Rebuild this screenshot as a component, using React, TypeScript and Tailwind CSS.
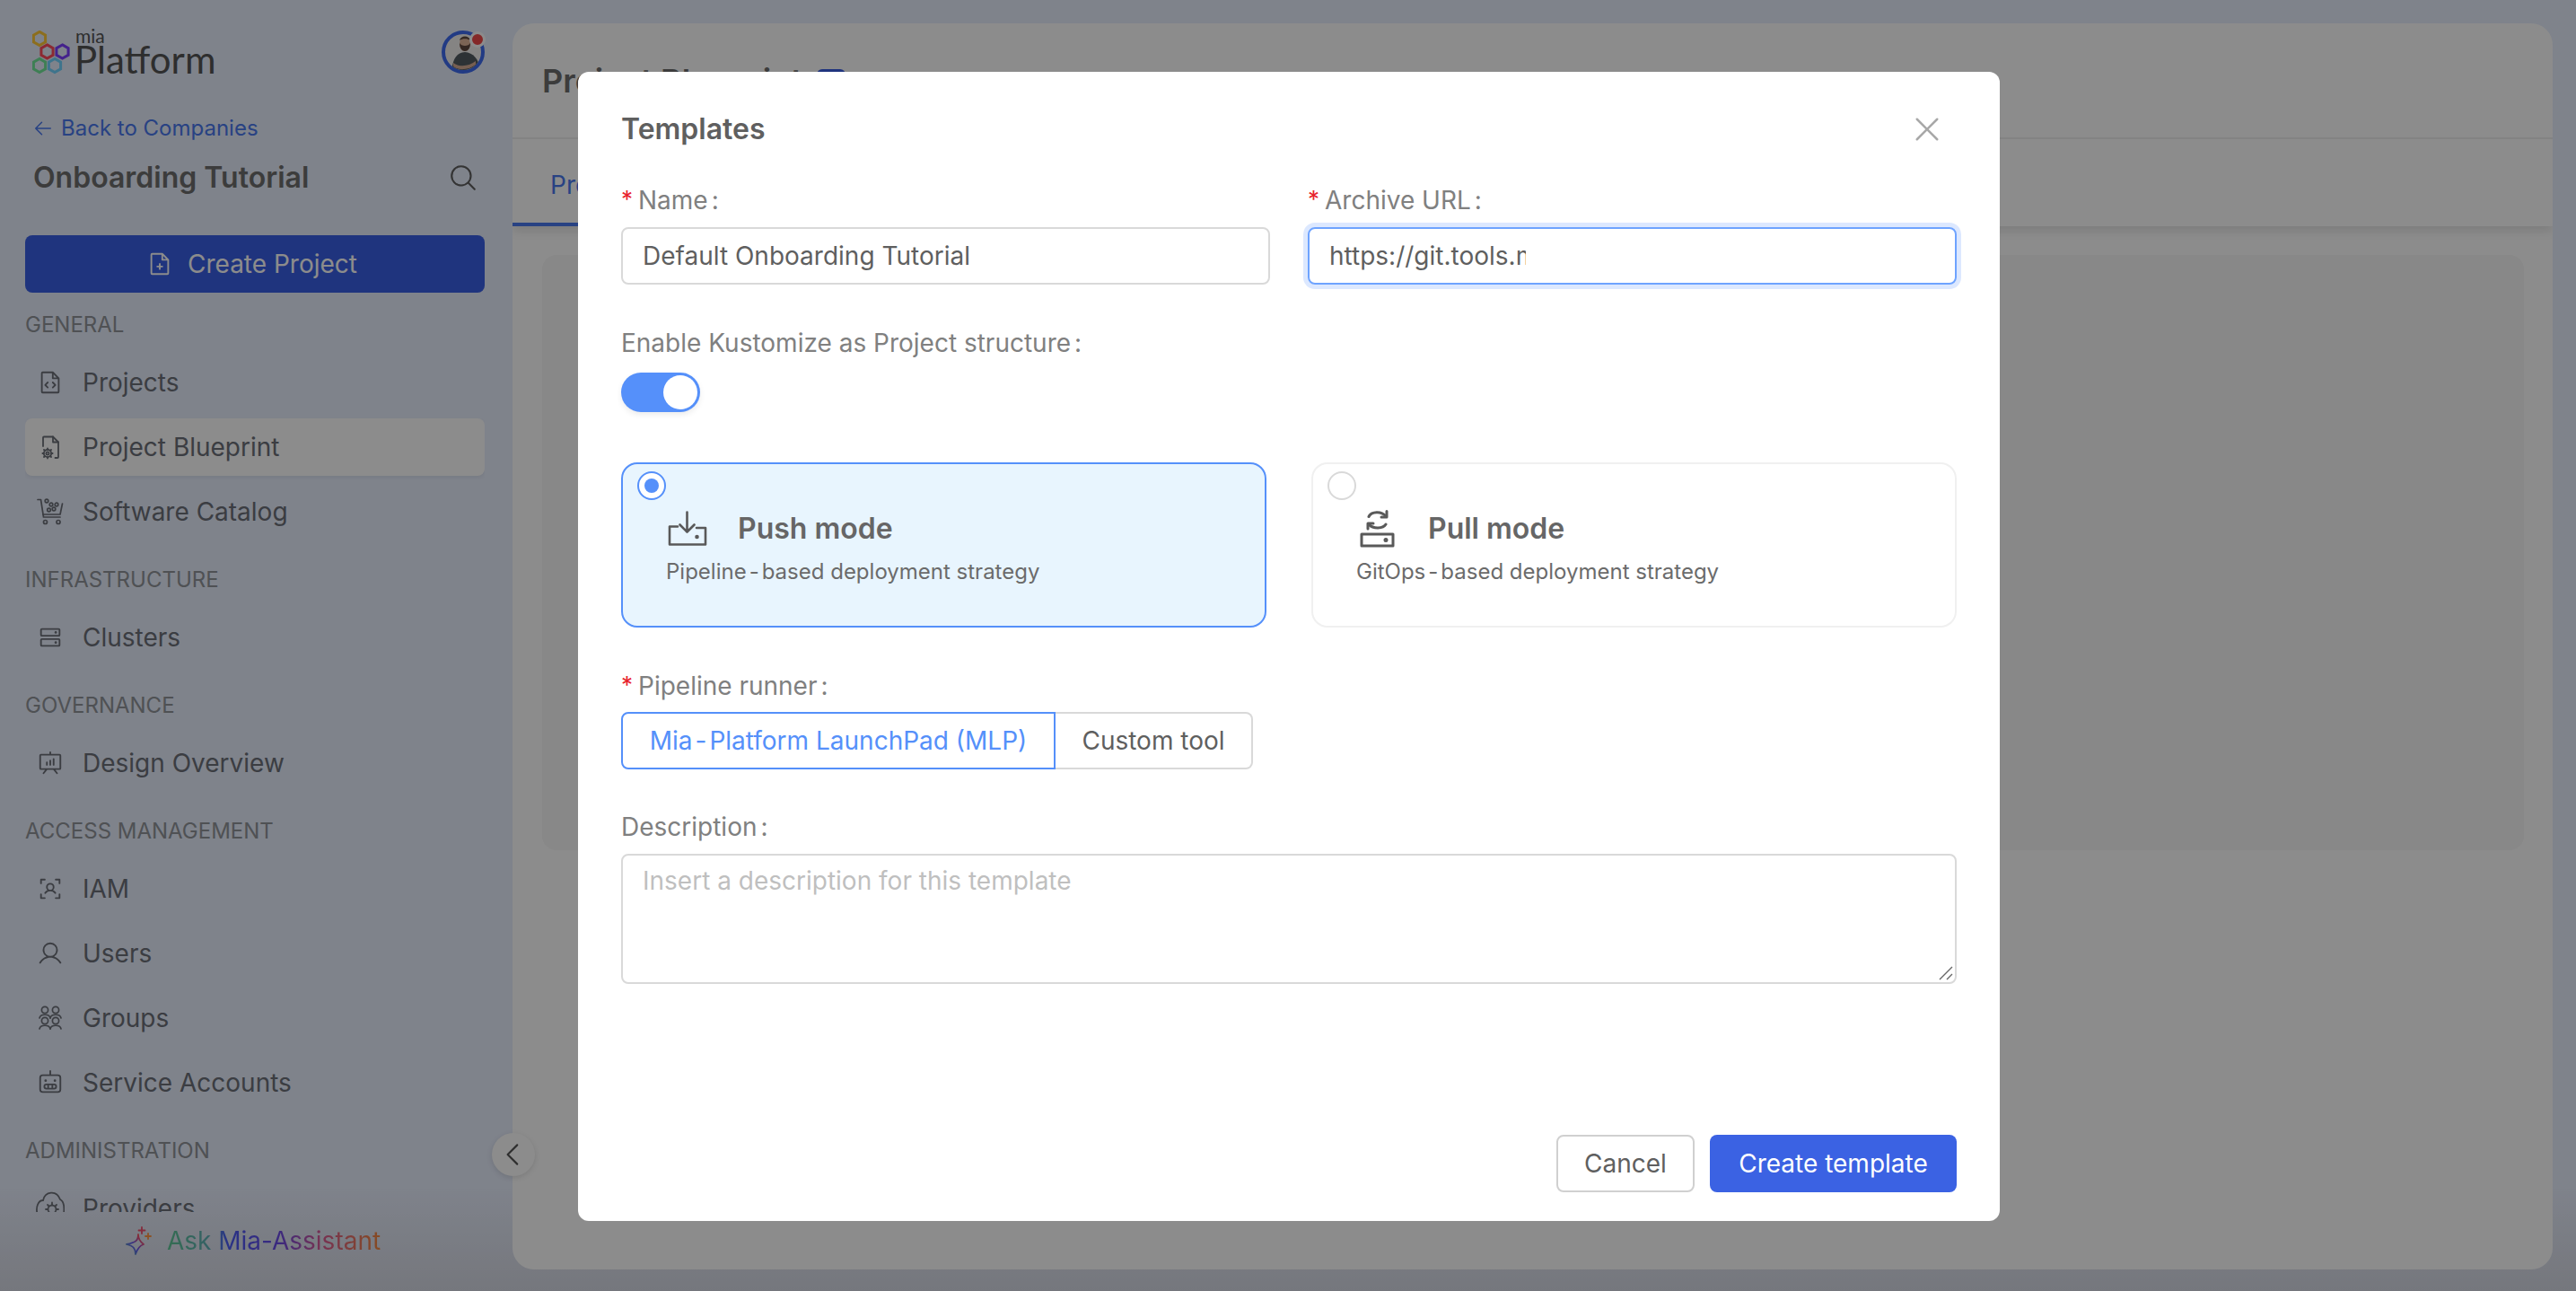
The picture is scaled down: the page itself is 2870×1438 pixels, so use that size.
import {
  PiArrowLeft,
  PiCaretLeft,
  PiFileCode,
  PiFilePlus,
  PiHardDrives,
  PiMagnifyingGlass,
  PiPresentationChart,
  PiRobot,
  PiUser,
  PiUserFocus,
  PiX,
} from "react-icons/pi";
import type { ReactNode } from "react";

function Hex({ cx, cy, color }: { cx: number; cy: number; color: string }) {
  const r = 7.6;
  const w = r * 0.866;
  return (
    <polygon
      points={`${cx},${cy - r} ${cx + w},${cy - r / 2} ${cx + w},${cy + r / 2} ${cx},${cy + r} ${cx - w},${cy + r / 2} ${cx - w},${cy - r / 2}`}
      fill="none"
      stroke={color}
      strokeWidth="3"
    />
  );
}

function Logo() {
  return (
    <div className="flex items-start gap-[3px]">
      <svg width="44" height="50" viewBox="0 0 44 50">
        <Hex cx={8} cy={9} color="#ffc838" />
        <Hex cx={16.5} cy={23.5} color="#ff4c5b" />
        <Hex cx={33.5} cy={23.5} color="#7d3eff" />
        <Hex cx={8} cy={39} color="#72e79a" />
        <Hex cx={25} cy={39} color="#72d3ff" />
      </svg>
      <div className="font-['Lato',sans-serif] text-[#555555] flex flex-col -mt-[3px]">
        <span className="h-[18px] pl-[1px] text-[21px] leading-[18px]">mia</span>
        <span className="h-[34px] text-[42px] leading-[34px]">Platform</span>
      </div>
    </div>
  );
}

function Avatar() {
  return (
    <div className="relative w-[48px] h-[48px]">
      <svg width="48" height="48" viewBox="0 0 48 48">
        <circle cx="24" cy="24" r="22" fill="#f3f0ee" stroke="#3f6cf0" strokeWidth="4" />
        <clipPath id="avatar-clip">
          <circle cx="24" cy="24" r="20" />
        </clipPath>
        <g clipPath="url(#avatar-clip)">
          <path d="M11 48 C12 32 16 25 26 24 C36 25 42 32 44 48 Z" fill="#525c62" />
          <ellipse cx="26" cy="15" rx="6" ry="8" fill="#e0b69c" />
          <path d="M20 14 C20 26 32 26 32 14 C30 18 22 18 20 14 Z" fill="#5e483e" />
          <path d="M20 11 C21 5 31 5 32 11 C29 8.5 23 8.5 20 11 Z" fill="#5e483e" />
          <path d="M13 36 C20 41 30 40 38 34 L38 38 C30 44 19 45 13 40 Z" fill="#d8ae96" />
        </g>
      </svg>
      <div className="absolute right-[-1px] top-[1px] w-[18px] h-[18px] rounded-full bg-[#f04a4a] border-[3px] border-white" />
    </div>
  );
}

function BlueprintIcon() {
  return (
    <svg width="30" height="30" viewBox="0 0 30 30" fill="none" stroke="currentColor" strokeWidth="1.8" strokeLinejoin="round" strokeLinecap="round">
      <path d="M7 14 V4.5 a1 1 0 0 1 1-1 H18 l6 6 V26 a1 1 0 0 1-1 1 h-2.5" />
      <path d="M18 3.5 V9.5 H24" />
      <circle cx="12" cy="22" r="1.6" />
      <circle cx="12" cy="22" r="4.2" />
      <path d="M12 16.4 V17.8 M12 26.2 V27.6 M6.4 22 H7.8 M16.2 22 H17.6 M8 18 L9 19 M15 25 L16 26 M8 26 L9 25 M15 19 L16 18" />
    </svg>
  );
}

function CatalogIcon() {
  return (
    <svg width="30" height="30" viewBox="0 0 30 30" fill="none" stroke="currentColor" strokeWidth="1.7" strokeLinecap="round" strokeLinejoin="round">
      <path d="M1 1.5 H4.5 L7.5 21 H26" />
      <path d="M28.5 6 L26 18 H7" />
      <circle cx="9.5" cy="26.5" r="2" />
      <circle cx="24" cy="26.5" r="2" />
      <circle cx="11" cy="3" r="1.8" />
      <circle cx="16" cy="7" r="1.8" />
      <circle cx="22" cy="7" r="1.8" />
      <circle cx="13.5" cy="13" r="1.8" />
      <circle cx="19" cy="12" r="1.8" />
    </svg>
  );
}

function GroupsIcon() {
  const person = (x: number, y: number) => (
    <g key={`${x}-${y}`}>
      <circle cx={x} cy={y} r="3.6" />
      <path d={`M${x - 6} ${y + 9} C${x - 5} ${y + 4} ${x + 5} ${y + 4} ${x + 6} ${y + 9}`} />
    </g>
  );
  return (
    <svg width="30" height="30" viewBox="0 0 30 30" fill="none" stroke="currentColor" strokeWidth="1.7" strokeLinecap="round">
      {person(9, 6)}
      {person(21, 6)}
      {person(9, 18)}
      {person(21, 18)}
    </svg>
  );
}

function ProvidersIcon() {
  return (
    <svg width="32" height="44" viewBox="0 0 32 44" fill="none" stroke="currentColor" strokeWidth="1.8" strokeLinecap="round" className="shrink-0">
      <path d="M2 30 C-1 20 3 13 8 13 C10 3 23 1 27 12 C31 14 32 20 31 28" />
      <circle cx="18" cy="23" r="4.5" />
      <path d="M18 15.5 V18 M11 23 H13 M23 23 H25 M13 18 L14.5 19.5 M21.5 19.5 L23 18" />
    </svg>
  );
}

function PushIcon() {
  return (
    <svg width="44" height="40" viewBox="0 0 44 40" fill="none" stroke="#595959" strokeWidth="2.6" strokeLinecap="round" strokeLinejoin="round">
      <path d="M21.5 1.5 V23 M13.5 15.5 L21.5 23.5 L29.5 15.5" />
      <path d="M11 17.5 H2 V37.5 H42 V19 H32" />
      <circle cx="32.5" cy="29" r="1" fill="#595959" />
    </svg>
  );
}

function PullIcon() {
  return (
    <svg width="40" height="42" viewBox="0 0 40 42" fill="none" stroke="#595959" strokeWidth="3" strokeLinecap="round" strokeLinejoin="round">
      <path d="M10 7.5 C13 1.5 24 1 29 7" />
      <path d="M30 1.5 V8 H24" />
      <path d="M29 16 C26 21 15 21.5 10 16" />
      <path d="M9 21 V15 H15" />
      <path d="M2 27 H37 V40 H2 Z" />
      <circle cx="29" cy="33.5" r="1" fill="#595959" />
    </svg>
  );
}

function SparkleIcon() {
  return (
    <svg width="32" height="32" viewBox="0 0 32 32" fill="none" strokeWidth="1.8" strokeLinejoin="round" strokeLinecap="round">
      <defs>
        <linearGradient id="spark" x1="0" y1="1" x2="1" y2="0">
          <stop offset="0" stopColor="#5fc796" />
          <stop offset="0.45" stopColor="#5f55f5" />
          <stop offset="0.8" stopColor="#f0506e" />
          <stop offset="1" stopColor="#ff9440" />
        </linearGradient>
      </defs>
      <path d="M16 9 C16 16 13 18 3 20 C11 22 13 25 13 31 C15 25 19 21 22 20 C18 17 16 14 16 9 Z" stroke="url(#spark)" />
      <path d="M20 1 V8 M16.5 4.5 H23.5" stroke="#f0506e" />
      <path d="M27 8 V14 M24 11 H30" stroke="#ff9440" />
    </svg>
  );
}

function SectionLabel({ children, className }: { children: ReactNode; className: string }) {
  return <div className={`h-[40px] shrink-0 flex items-center text-[24px] text-[#909499] ${className}`}>{children}</div>;
}

function NavItem({ icon, label, active }: { icon: ReactNode; label: string; active?: boolean }) {
  return (
    <div
      className={`h-[64px] rounded-[8px] flex items-center pl-[13px] gap-[21px] text-[28px] text-[#6c7078] shrink-0 ${
        active ? "bg-white shadow-[0_2px_4px_rgba(0,0,0,0.06)]" : ""
      }`}
    >
      <span className="w-[30px] h-[30px] flex items-center justify-center shrink-0">{icon}</span>
      {label}
    </div>
  );
}

function Sidebar() {
  return (
    <aside className="w-[571px] shrink-0 pl-[28px] pr-[31px] pt-[34px] flex flex-col h-full">
      <div className="flex justify-between items-start pl-[8px]">
        <Logo />
        <Avatar />
      </div>
      <div className="h-[36px] mt-[41px] pl-[8px] flex items-center gap-[8px] text-[24px] text-[#4a78ee]">
        <PiArrowLeft size={24} />
        Back to Companies
      </div>
      <div className="h-[44px] mt-[15px] pl-[9px] pr-[7px] flex items-center justify-between text-[#6d6d6d]">
        <span className="text-[32px] font-semibold">Onboarding Tutorial</span>
        <PiMagnifyingGlass size={34} className="text-[#5f5f5f]" />
      </div>
      <div className="h-[64px] mt-[42px] pr-[7px] shrink-0 rounded-[8px] bg-[#3a60e5] text-white text-[28px] flex items-center justify-center gap-[16px]">
        <PiFilePlus size={30} />
        Create Project
      </div>
      <div className="h-[1024px] overflow-hidden flex flex-col shrink-0">
        <SectionLabel className="mt-[16px] mb-[12px]">GENERAL</SectionLabel>
        <div className="flex flex-col gap-[8px]">
          <NavItem icon={<PiFileCode size={30} />} label="Projects" />
          <NavItem icon={<BlueprintIcon />} label="Project Blueprint" active />
          <NavItem icon={<CatalogIcon />} label="Software Catalog" />
        </div>
        <SectionLabel className="mt-[24px] mb-[12px]">INFRASTRUCTURE</SectionLabel>
        <NavItem icon={<PiHardDrives size={30} />} label="Clusters" />
        <SectionLabel className="mt-[24px] mb-[12px]">GOVERNANCE</SectionLabel>
        <NavItem icon={<PiPresentationChart size={30} />} label="Design Overview" />
        <SectionLabel className="mt-[24px] mb-[12px]">ACCESS MANAGEMENT</SectionLabel>
        <div className="flex flex-col gap-[8px]">
          <NavItem icon={<PiUserFocus size={30} />} label="IAM" />
          <NavItem icon={<PiUser size={30} />} label="Users" />
          <NavItem icon={<GroupsIcon />} label="Groups" />
          <NavItem icon={<PiRobot size={30} />} label="Service Accounts" />
        </div>
        <SectionLabel className="mt-[24px] mb-[12px]">ADMINISTRATION</SectionLabel>
        <NavItem icon={<ProvidersIcon />} label="Providers" />
      </div>
      <div className="mt-[11px] pr-[6px] flex items-center justify-center gap-[16px] text-[28px]">
        <SparkleIcon />
        <span className="bg-clip-text text-transparent bg-[linear-gradient(90deg,#5fc796_0%,#5fb0b8_20%,#4a5cf5_28%,#6a4be8_52%,#d85a96_72%,#f58a40_100%)]">
          Ask Mia-Assistant
        </span>
      </div>
    </aside>
  );
}

function MainPanel() {
  return (
    <main className="w-[2273px] h-[1388px] mt-[26px] rounded-[24px] bg-white flex flex-col overflow-hidden shrink-0">
      <div className="h-[129px] shrink-0 border-b-2 border-[#f0f0f0] pl-[33px] flex items-center gap-[16px] text-[#6d6d6d]">
        <span className="text-[36px] font-semibold">Project Blueprint</span>
        <span className="w-[32px] h-[26px] rounded-[6px] bg-[#3a60e5]" />
      </div>
      <div className="h-[97px] shrink-0 shadow-[0_6px_10px_rgba(0,0,0,0.1)]">
        <div className="w-[200px] h-full border-b-[4px] border-[#4a78ee] pl-[42px] pt-[30px] text-[28px] text-[#4a78ee]">Project</div>
      </div>
      <div className="mt-[32px] ml-[33px] mr-[32px] h-[663px] rounded-[16px] bg-[#f7f7f7]" />
    </main>
  );
}

function Hyphen() {
  return <span className="mx-[3px]">-</span>;
}

function Label({ text, required }: { text: string; required?: boolean }) {
  return (
    <div className="h-[36px] flex items-center text-[28px] text-[#808080]">
      {required && <span className="text-[#e8232d] w-[19px] text-[26px] leading-[26px] self-start mt-[4px]">*</span>}
      <span>
        {text}
        <span className="ml-[4px]">:</span>
      </span>
    </div>
  );
}

function ModeCard({
  selected,
  icon,
  title,
  description,
}: {
  selected?: boolean;
  icon: ReactNode;
  title: string;
  description: ReactNode;
}) {
  return (
    <div
      className={`h-[184px] w-[719px] rounded-[18px] border-2 pl-[16px] pt-[8px] ${
        selected ? "border-[#5590fa] bg-[#e8f5fe]" : "border-[#f0f0f0] bg-white"
      }`}
    >
      <div
        className={`w-[32px] h-[32px] rounded-full border-2 bg-white flex items-center justify-center ${
          selected ? "border-[#5590fa]" : "border-[#d9d9d9]"
        }`}
      >
        {selected && <div className="w-[16px] h-[16px] rounded-full bg-[#5590fa]" />}
      </div>
      <div className="pl-[34px] mt-[7px] flex items-center gap-[34px] h-[50px]">
        <span className="w-[44px] flex justify-center">{icon}</span>
        <span className="text-[32px] font-semibold text-[#666666]">{title}</span>
      </div>
      <div className="pl-[32px] mt-[7px] text-[24px] leading-[32px] text-[#6b6b6b]">{description}</div>
    </div>
  );
}

function Modal() {
  return (
    <div className="absolute left-[644px] top-[80px] w-[1584px] h-[1280px] rounded-[12px] bg-white px-[48px] flex flex-col font-['Inter',sans-serif]">
      <div className="h-[48px] mt-[40px] flex items-center justify-between shrink-0">
        <span className="text-[32px] font-semibold text-[#5f5f5f]">Templates</span>
        <PiX size={40} className="text-[#a8a8a8] mr-[13px]" />
      </div>
      <div className="grid grid-cols-2 gap-x-[42px] mt-[37px]">
        <div className="flex flex-col gap-[12px]">
          <Label text="Name" required />
          <input
            readOnly
            value="Default Onboarding Tutorial"
            className="h-[64px] rounded-[8px] border-2 border-[#d9d9d9] px-[22px] text-[28px] text-[#5f5f5f] outline-none"
          />
        </div>
        <div className="flex flex-col gap-[12px]">
          <Label text="Archive URL" required />
          <div className="h-[64px] rounded-[8px] border-2 border-[#6ea3ff] shadow-[0_0_0_5px_#dce8ff] px-[22px] flex items-center">
            <span className="w-[219px] overflow-hidden whitespace-nowrap text-[28px] text-[#5f5f5f]">https://git.tools.mia-platform.eu</span>
          </div>
        </div>
      </div>
      <div className="mt-[47px]">
        <Label text="Enable Kustomize as Project structure" />
      </div>
      <div className="w-[88px] h-[44px] mt-[15px] rounded-full bg-[#5590fa] flex items-center justify-end pr-[3px] shadow-[0_3px_6px_rgba(0,0,0,0.08)]">
        <div className="w-[38px] h-[38px] rounded-full bg-white" />
      </div>
      <div className="flex justify-between mt-[56px]">
        <ModeCard
          selected
          icon={<PushIcon />}
          title="Push mode"
          description={
            <>
              Pipeline<Hyphen />based deployment strategy
            </>
          }
        />
        <ModeCard
          icon={<PullIcon />}
          title="Pull mode"
          description={
            <>
              GitOps<Hyphen />based deployment strategy
            </>
          }
        />
      </div>
      <div className="mt-[47px]">
        <Label text="Pipeline runner" required />
      </div>
      <div className="flex mt-[11px] text-[28px]">
        <div className="h-[64px] w-[484px] rounded-l-[8px] border-2 border-[#5590fa] text-[#5590fa] flex items-center justify-center whitespace-pre">
          <span>
            Mia<Hyphen />Platform LaunchPad (MLP)
          </span>
        </div>
        <div className="h-[64px] w-[220px] rounded-r-[8px] border-2 border-l-0 border-[#d9d9d9] text-[#5f5f5f] flex items-center justify-center">
          Custom tool
        </div>
      </div>
      <div className="mt-[46px]">
        <Label text="Description" />
      </div>
      <div className="relative mt-[12px] flex">
        <textarea
          readOnly
          placeholder="Insert a description for this template"
          className="w-full h-[145px] rounded-[8px] border-2 border-[#d9d9d9] px-[22px] py-[10px] text-[28px] leading-[36px] outline-none resize-none placeholder:text-[#bfbfbf]"
        />
        <svg width="16" height="16" viewBox="0 0 16 16" className="absolute right-[4px] bottom-[4px]" stroke="#666666" strokeWidth="1.4">
          <path d="M1 15 L15 1 M9 15 L15 9" />
        </svg>
      </div>
      <div className="flex justify-end gap-[17px] mt-auto mb-[32px]">
        <div className="h-[64px] w-[154px] rounded-[8px] border-2 border-[#d0d0d0] text-[28px] text-[#5f5f5f] flex items-center justify-center">
          Cancel
        </div>
        <div className="h-[64px] w-[275px] rounded-[8px] bg-[#3b62e3] text-[28px] text-white flex items-center justify-center">
          Create template
        </div>
      </div>
    </div>
  );
}

export default function App() {
  return (
    <div className="relative w-[2870px] h-[1438px] overflow-hidden bg-[linear-gradient(180deg,#e7eefd_0%,#e7eefd_92%,#d6d9e4_100%)] font-['Inter',sans-serif]">
      <div className="flex h-full">
        <Sidebar />
        <MainPanel />
      </div>
      <div className="absolute left-[548px] top-[1262px] w-[48px] h-[48px] rounded-full bg-white shadow-[0_2px_6px_rgba(0,0,0,0.12)] flex items-center justify-center text-[#555555]">
        <PiCaretLeft size={34} />
      </div>
      <div className="absolute inset-0 bg-black/45" />
      <Modal />
    </div>
  );
}
